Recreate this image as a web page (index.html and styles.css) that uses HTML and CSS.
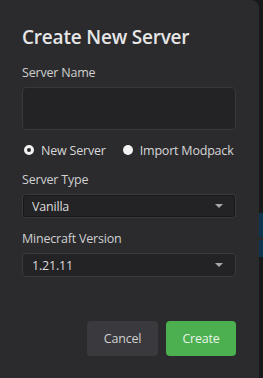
FILE: index.html
```html
<!DOCTYPE html>
<html lang="en">
<head>
    <meta charset="UTF-8">
    <meta name="viewport" content="width=device-width, initial-scale=1.0">
    <title>Create New Server</title>
    <link rel="stylesheet" href="styles.css">
</head>
<body>
    <div class="screen">
        <div class="dialog">
            <h1>Create New Server</h1>
            <form class="server-form">
                <label class="field-label" for="server-name">Server Name</label>
                <input type="text" id="server-name" class="text-input">

                <div class="radio-row">
                    <label class="radio checked"><span class="dot"></span>New Server</label>
                    <label class="radio"><span class="dot"></span>Import Modpack</label>
                </div>

                <div class="field-label">Server Type</div>
                <div class="select focused">
                    <span>Vanilla</span>
                    <span class="caret"></span>
                </div>

                <div class="field-label">Minecraft Version</div>
                <div class="select">
                    <span>1.21.11</span>
                    <span class="caret"></span>
                </div>

                <div class="actions">
                    <button type="button" class="btn cancel-btn">Cancel</button>
                    <button type="button" class="btn create-btn">Create</button>
                </div>
            </form>
        </div>
        <div class="side">
            <div class="side-gap"></div>
            <div class="side-blue"></div>
            <div class="side-line"></div>
            <div class="side-blue short"></div>
        </div>
    </div>
</body>
</html>
```

FILE: styles.css
```css
body {
    margin: 0;
    padding: 0;
    background-color: #19191b;
    font-family: "Open Sans", "Noto Sans", sans-serif;
    color: #d4d4d4;
}

.screen {
    display: flex;
    height: 378px;
    overflow: hidden;
}

.dialog {
    width: 259px;
    box-sizing: border-box;
    padding: 24px 23px 0 22px;
    background-color: #2b2b2e;
    border-top-right-radius: 8px;
}

.dialog h1 {
    margin: 0;
    font-size: 19px;
    line-height: 26px;
    font-weight: 600;
    color: #e6e6e6;
    letter-spacing: -0.2px;
}

.server-form {
    display: flex;
    flex-direction: column;
}

.field-label {
    display: block;
    font-size: 12.5px;
    line-height: 18px;
    color: #cfcfcf;
    letter-spacing: -0.2px;
}

.server-form > .field-label:first-child {
    margin-top: 14px;
    margin-bottom: 5px;
}

.text-input {
    height: 43px;
    box-sizing: border-box;
    margin: 0;
    border: 1px solid #38383b;
    border-radius: 4px;
    background-color: #232325;
    color: #ddd;
}

.radio-row {
    display: flex;
    gap: 17px;
    margin: 11px 0 12px 2px;
    height: 18px;
    align-items: center;
}

.radio {
    display: flex;
    align-items: center;
    gap: 7px;
    font-size: 12.5px;
    color: #d6d6d6;
    letter-spacing: -0.2px;
}

.dot {
    width: 10px;
    height: 10px;
    border-radius: 50%;
    box-sizing: border-box;
    background-color: #f2f2f2;
}

.radio.checked .dot {
    border: 3px solid #f2f2f2;
    background-color: #2b2b2e;
}

.select {
    display: flex;
    align-items: center;
    justify-content: space-between;
    height: 24px;
    box-sizing: border-box;
    margin-top: 5px;
    padding: 0 12px 0 9px;
    border: 1px solid #3a3a3d;
    border-radius: 4px;
    background-color: #232325;
    font-size: 12.5px;
    color: #dcdcdc;
    letter-spacing: -0.2px;
}

.select.focused {
    outline: 1px dotted #0e0e0e;
    outline-offset: -2px;
    margin-bottom: 12px;
}

.caret {
    width: 0;
    height: 0;
    border-left: 4px solid transparent;
    border-right: 4px solid transparent;
    border-top: 4px solid #a8a8a8;
}

.actions {
    display: flex;
    justify-content: flex-end;
    gap: 8px;
    margin-top: 44px;
}

.btn {
    height: 35px;
    border: none;
    border-radius: 4px;
    font-family: inherit;
    font-size: 12.5px;
    letter-spacing: -0.2px;
    cursor: pointer;
}

.cancel-btn {
    width: 71px;
    background-color: #3a3a3e;
    color: #d0d0d0;
}

.create-btn {
    width: 70px;
    background-color: #4caf50;
    color: #e8f5e9;
}

.side {
    flex: 1;
    display: flex;
    flex-direction: column;
}

.side-gap {
    height: 213px;
}

.side-blue {
    height: 24px;
    background-color: #0d3550;
}

.side-blue.short {
    height: 17px;
}

.side-line {
    height: 3px;
    background-color: #2a2a2c;
}
```
